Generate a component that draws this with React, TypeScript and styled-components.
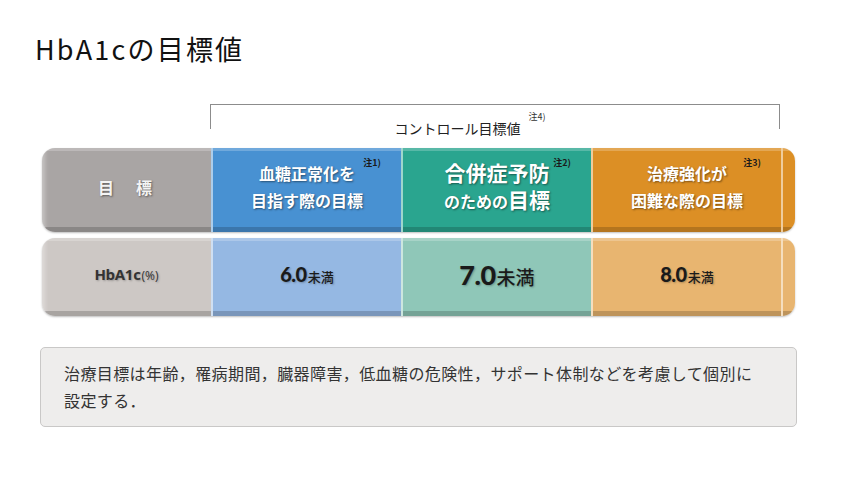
import React from "react";
import styled, { createGlobalStyle } from "styled-components";

const Global = createGlobalStyle`
  html, body { margin: 0; padding: 0; background: #ffffff; }
  body { font-family: "Noto Sans CJK JP", "Noto Sans", sans-serif; }
`;

const Page = styled.div`
  width: 850px;
  height: 480px;
  box-sizing: border-box;
  padding: 34px 0 0 0;
  background: #fff;
`;

const Title = styled.h1`
  margin: 0 0 0 35px;
  height: 30px;
  font-family: "Noto Sans CJK JP", sans-serif;
  font-weight: 400;
  font-size: 27px;
  line-height: 30px;
  letter-spacing: 2.2px;
  color: #111;
`;

const Bracket = styled.div`
  position: relative;
  margin: 40px 0 0 210px;
  width: 570px;
  height: 44px;
  box-sizing: border-box;
  border-top: 1px solid #8c8c8c;
  display: flex;
  justify-content: center;
  padding: 11px 75px 0 0;
  &::before, &::after {
    content: "";
    position: absolute;
    top: 0;
    width: 1px;
    height: 24px;
    background: #8c8c8c;
  }
  &::before { left: 0; }
  &::after { right: 0; }
`;

const BracketLabel = styled.span`
  position: relative;
  font-size: 14px;
  line-height: 24px;
  color: #222;
  height: 24px;
`;

const Sup = styled.span`
  position: absolute;
  font-size: 9px;
  line-height: 10px;
  font-weight: 700;
  white-space: nowrap;
  color: #1a1a1a;
`;

const BracketNote = styled(Sup)`
  left: calc(100% + 8px);
  top: -4px;
  font-weight: 400;
  color: #333;
`;

const Row = styled.div<{ $h: number; $mt: number }>`
  display: flex;
  margin: ${(p) => p.$mt}px 0 0 42px;
  width: 753px;
  height: ${(p) => p.$h}px;
  border-radius: 13px;
  overflow: hidden;
  box-shadow: 0 1px 2px rgba(0, 0, 0, 0.25);
`;

const Cell = styled.div<{ $bg: string; $w: number; $first?: boolean }>`
  position: relative;
  flex: 0 0 ${(p) => p.$w}px;
  box-sizing: border-box;
  background: ${(p) => p.$bg};
  display: flex;
  flex-direction: column;
  align-items: center;
  justify-content: center;
  padding-bottom: 6px;
  border-left: ${(p) => (p.$first ? "none" : "2px solid rgba(255,255,255,0.55)")};
  box-shadow: inset 0 -5px 0 rgba(0, 0, 0, 0.18), inset 0 3px 0 rgba(255, 255, 255, 0.22)
    ${(p) => (p.$first ? ", inset 6px 0 4px -3px rgba(255,255,255,0.35)" : "")};
`;

const HeadText = styled.div<{ $size?: number }>`
  font-family: "Noto Sans CJK JP", sans-serif;
  font-weight: 700;
  font-size: ${(p) => p.$size ?? 16}px;
  line-height: 27px;
  color: #ffffff;
  text-shadow: 1px 1px 2px rgba(0, 0, 0, 0.45);
  white-space: nowrap;
`;

const Big = styled.span`
  font-size: 21px;
`;

const Note = styled(Sup)`
  top: 10px;
  right: 20px;
`;

const LabelText = styled(HeadText)`
  font-size: 16px;
  letter-spacing: 3px;
  color: #f4f4f4;
`;

const Value = styled.div`
  display: flex;
  align-items: baseline;
  font-family: Lato, "Noto Sans CJK JP", sans-serif;
  color: #1a1a1a;
  text-shadow: 1px 1px 2px rgba(0, 0, 0, 0.25);
`;

const Num = styled.span<{ $size: number }>`
  font-family: Lato, sans-serif;
  font-weight: 900;
  font-size: ${(p) => p.$size}px;
  letter-spacing: -0.5px;
`;

const Unit = styled.span<{ $size: number }>`
  font-family: "Noto Sans CJK JP", sans-serif;
  font-weight: 500;
  font-size: ${(p) => p.$size}px;
  margin-left: 1px;
`;

const HbLabel = styled.span`
  font-family: "Open Sans", sans-serif;
  font-weight: 700;
  font-size: 15px;
  color: #333;
  letter-spacing: -0.3px;
`;

const Pct = styled.span`
  font-family: "Open Sans", sans-serif;
  font-weight: 400;
  font-size: 12px;
  color: #333;
  margin-left: 1px;
`;

const NoteBox = styled.div`
  margin: 31px 0 0 40px;
  width: 757px;
  height: 80px;
  box-sizing: border-box;
  padding: 12px 0 12px 23px;
  background: #eeedec;
  border: 1.5px solid #c9c8c7;
  border-radius: 5px;
  font-family: "Noto Sans CJK JP", sans-serif;
  font-size: 16px;
  line-height: 27px;
  letter-spacing: 0.4px;
  color: #333;
`;

const cols = {
  gray: ["#a9a5a4", "#cdc8c5"],
  blue: ["#4891d2", "#95b8e3"],
  green: ["#2aa58f", "#8fc7b8"],
  orange: ["#dc8f25", "#e8b570"],
};

export default function App() {
  return (
    <>
      <Global />
      <Page>
        <Title>HbA1cの目標値</Title>
        <Bracket>
          <BracketLabel>
            コントロール目標値
            <BracketNote>注4)</BracketNote>
          </BracketLabel>
        </Bracket>

        <Row $h={84} $mt={0}>
          <Cell $bg={cols.gray[0]} $w={169} $first>
            <LabelText>目　標</LabelText>
          </Cell>
          <Cell $bg={cols.blue[0]} $w={190}>
            <HeadText>血糖正常化を</HeadText>
            <HeadText>目指す際の目標</HeadText>
            <Note>注1)</Note>
          </Cell>
          <Cell $bg={cols.green[0]} $w={190}>
            <HeadText $size={21}>合併症予防</HeadText>
            <HeadText>
              のための<Big>目標</Big>
            </HeadText>
            <Note>注2)</Note>
          </Cell>
          <Cell $bg={cols.orange[0]} $w={190}>
            <HeadText>治療強化が</HeadText>
            <HeadText>困難な際の目標</HeadText>
            <Note>注3)</Note>
          </Cell>
          <Cell $bg={cols.orange[0]} $w={14} />
        </Row>

        <Row $h={78} $mt={6}>
          <Cell $bg={cols.gray[1]} $w={169} $first>
            <Value>
              <HbLabel>HbA1c</HbLabel>
              <Pct>(%)</Pct>
            </Value>
          </Cell>
          <Cell $bg={cols.blue[1]} $w={190}>
            <Value>
              <Num $size={20}>6.0</Num>
              <Unit $size={13}>未満</Unit>
            </Value>
          </Cell>
          <Cell $bg={cols.green[1]} $w={190}>
            <Value>
              <Num $size={27}>7.0</Num>
              <Unit $size={19}>未満</Unit>
            </Value>
          </Cell>
          <Cell $bg={cols.orange[1]} $w={190}>
            <Value>
              <Num $size={20}>8.0</Num>
              <Unit $size={13}>未満</Unit>
            </Value>
          </Cell>
          <Cell $bg={cols.orange[1]} $w={14} />
        </Row>

        <NoteBox>
          治療目標は年齢，罹病期間，臓器障害，低血糖の危険性，サポート体制などを考慮して個別に
          <br />
          設定する．
        </NoteBox>
      </Page>
    </>
  );
}
